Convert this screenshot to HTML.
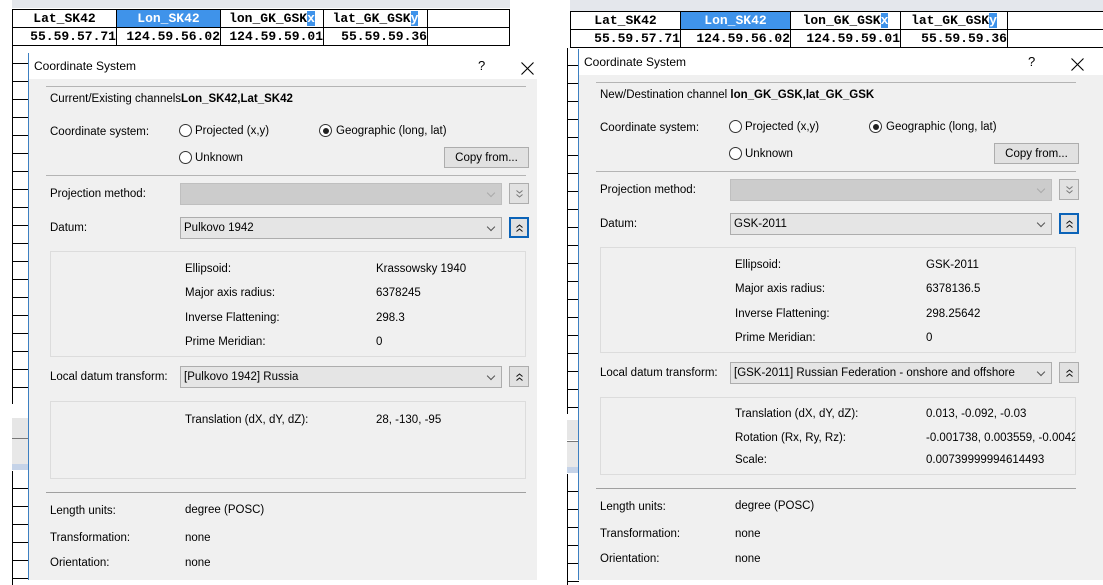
<!DOCTYPE html>
<html><head><meta charset="utf-8">
<style>
*{margin:0;padding:0;box-sizing:border-box}
body{width:1103px;height:585px;background:#fff;position:relative;overflow:hidden;font-family:"Liberation Sans",sans-serif;font-size:11.5px;color:#000}
.a{position:absolute;white-space:nowrap}
.dlg .a{transform:translateY(2px)}
.strip{position:absolute;background:#e4e7ec}
.tbl{position:absolute;border:1.5px solid #000;background:#fff}
.cell{position:absolute;top:0;height:100%;border-right:1.5px solid #000;font-family:"Liberation Mono",monospace;font-weight:bold;font-size:13px;text-align:center;line-height:17px}
.grid{position:absolute;background:repeating-linear-gradient(to bottom,#fff 0,#fff 17px,#000 17px,#000 18px);border-left:1.5px solid #000}
.dlg{position:absolute;background:#f0f0f0;border-left:1px solid #3c7fc1;overflow:hidden}
.title{position:absolute;left:0;top:0;right:0;height:26px;background:#fff}
.sep{position:absolute;height:1px;background:#a0a0a0}
.radio{position:absolute;width:13px;height:13px;border:1px solid #333;border-radius:50%;background:#fff}
.radio.on::after{content:"";position:absolute;left:2.5px;top:2.5px;width:6px;height:6px;border-radius:50%;background:#222}
.btn{position:absolute;background:#e1e1e1;border:1px solid #adadad;text-align:center;line-height:20px}
.combo{position:absolute;background:#e5e5e5;border:1px solid #adadad;padding-left:3px;line-height:21px;height:22px}
.combo.dis{background:#ccc;border-color:#bfbfbf}
.arr{position:absolute;right:7px;top:6px;width:6px;height:6px;border-right:1px solid #555;border-bottom:1px solid #555;transform:rotate(45deg)}
.dis .arr{border-color:#aaa}
.sb{position:absolute;width:20px;height:21px;background:#e1e1e1;border:1px solid #adadad}
.sb svg{position:absolute;left:5px;top:5px}
.sb.foc{border:2px solid #0b63b8}
.sb.foc svg{left:4px;top:4px}
.grp{position:absolute;border:1px solid #dcdcdc}
</style></head><body>

<!-- LEFT PANEL -->
<div class="strip" style="left:12px;top:0;width:498px;height:8px"></div>
<div class="tbl" style="left:12px;top:9px;width:498px;height:19px">
 <div class="cell" style="left:0;width:104px">Lat_SK42</div>
 <div class="cell" style="left:104px;width:104px;background:#3f93ea;color:#fff">Lon_SK42</div>
 <div class="cell" style="left:208px;width:103px">lon_GK_GSK<span style="background:#3f93ea;color:#fff">x</span></div>
 <div class="cell" style="left:311px;width:104px">lat_GK_GSK<span style="background:#3f93ea;color:#fff">y</span></div>
</div>
<div class="tbl" style="left:12px;top:27px;width:498px;height:19px">
 <div class="cell" style="left:0;width:104px;text-align:right">55.59.57.71</div>
 <div class="cell" style="left:104px;width:104px;text-align:right">124.59.56.02</div>
 <div class="cell" style="left:208px;width:103px;text-align:right">124.59.59.01</div>
 <div class="cell" style="left:311px;width:104px;text-align:right">55.59.59.36</div>
</div>
<div class="grid" style="left:12px;top:46px;width:17px;height:358px"></div>
<div class="strip" style="left:12px;top:418px;width:17px;height:20px;background:#e6e6e6"></div>
<div class="strip" style="left:12px;top:438px;width:17px;height:1px;background:#777"></div>
<div class="strip" style="left:12px;top:439px;width:17px;height:25px;background:#e8e8e8"></div>
<div class="strip" style="left:12px;top:464px;width:17px;height:6px;background:#c5d3e8"></div>
<div class="grid" style="left:12px;top:471px;width:17px;height:114px"></div>

<div class="dlg" style="left:28px;top:53px;width:509px;height:527px">
 <div class="title"></div>
 <div class="a" style="left:5px;top:4px;font-size:12px">Coordinate System</div>
 <div class="a" style="left:449px;top:3px;font-size:13px">?</div>
 <svg class="a" style="left:492px;top:7px" width="13" height="13"><path d="M0.5 0.5L12.5 12.5M12.5 0.5L0.5 12.5" stroke="#000" stroke-width="1.1"/></svg>
 <div class="sep" style="left:17px;top:33px;width:480px;background:#b4b4b4"></div>
 <div class="a" style="left:21px;top:38px">Current/Existing channels<b>Lon_SK42,Lat_SK42</b></div>
 <div class="a" style="left:21px;top:71px">Coordinate system:</div>
 <div class="radio" style="left:150px;top:71px"></div><div class="a" style="left:166px;top:70px">Projected (x,y)</div>
 <div class="radio on" style="left:290px;top:71px"></div><div class="a" style="left:307px;top:70px">Geographic (long, lat)</div>
 <div class="radio" style="left:150px;top:98px"></div><div class="a" style="left:166px;top:97px">Unknown</div>
 <div class="btn" style="left:415px;top:94px;width:85px;height:21px">Copy from...</div>
 <div class="sep" style="left:17px;top:122px;width:480px;background:#b4b4b4"></div>
 <div class="a" style="left:21px;top:133px">Projection method:</div>
 <div class="combo dis" style="left:151px;top:130px;width:322px"><div class="arr"></div></div>
 <div class="sb" style="left:480px;top:130px"><svg width="9" height="10"><path d="M1.5 1.5L4.5 4L7.5 1.5M1.5 5.5L4.5 8L7.5 5.5" stroke="#777" fill="none"/></svg></div>
 <div class="a" style="left:21px;top:167px">Datum:</div>
 <div class="combo" style="left:151px;top:164px;width:322px">Pulkovo 1942<div class="arr"></div></div>
 <div class="sb foc" style="left:480px;top:164px"><svg width="9" height="10"><path d="M1.5 4.5L4.5 2L7.5 4.5M1.5 8.5L4.5 6L7.5 8.5" stroke="#111" fill="none"/></svg></div>
 <div class="grp" style="left:21px;top:198px;width:476px;height:106px"></div>
 <div class="a" style="left:156px;top:208px">Ellipsoid:</div><div class="a" style="left:347px;top:208px">Krassowsky 1940</div>
 <div class="a" style="left:156px;top:232px">Major axis radius:</div><div class="a" style="left:347px;top:232px">6378245</div>
 <div class="a" style="left:156px;top:257px">Inverse Flattening:</div><div class="a" style="left:347px;top:257px">298.3</div>
 <div class="a" style="left:156px;top:281px">Prime Meridian:</div><div class="a" style="left:347px;top:281px">0</div>
 <div class="a" style="left:21px;top:316px">Local datum transform:</div>
 <div class="combo" style="left:151px;top:313px;width:322px">[Pulkovo 1942] Russia<div class="arr"></div></div>
 <div class="sb" style="left:480px;top:313px"><svg width="9" height="10"><path d="M1.5 4.5L4.5 2L7.5 4.5M1.5 8.5L4.5 6L7.5 8.5" stroke="#111" fill="none"/></svg></div>
 <div class="grp" style="left:21px;top:348px;width:476px;height:78px"></div>
 <div class="a" style="left:156px;top:359px">Translation (dX, dY, dZ):</div><div class="a" style="left:347px;top:359px">28, -130, -95</div>
 <div class="sep" style="left:17px;top:439px;width:480px"></div>
 <div class="a" style="left:21px;top:450px">Length units:</div><div class="a" style="left:156px;top:449px">degree (POSC)</div>
 <div class="a" style="left:21px;top:477px">Transformation:</div><div class="a" style="left:156px;top:477px">none</div>
 <div class="a" style="left:21px;top:502px">Orientation:</div><div class="a" style="left:156px;top:502px">none</div>
</div>

<!-- RIGHT PANEL -->
<div class="strip" style="left:570px;top:0;width:533px;height:11px"></div>
<div class="tbl" style="left:570px;top:11px;width:540px;height:19px">
 <div class="cell" style="left:0;width:110px">Lat_SK42</div>
 <div class="cell" style="left:110px;width:110px;background:#3f93ea;color:#fff">Lon_SK42</div>
 <div class="cell" style="left:220px;width:110px">lon_GK_GSK<span style="background:#3f93ea;color:#fff">x</span></div>
 <div class="cell" style="left:330px;width:107px">lat_GK_GSK<span style="background:#3f93ea;color:#fff">y</span></div>
</div>
<div class="tbl" style="left:570px;top:29px;width:540px;height:19px">
 <div class="cell" style="left:0;width:110px;text-align:right">55.59.57.71</div>
 <div class="cell" style="left:110px;width:110px;text-align:right">124.59.56.02</div>
 <div class="cell" style="left:220px;width:110px;text-align:right">124.59.59.01</div>
 <div class="cell" style="left:330px;width:107px;text-align:right">55.59.59.36</div>
</div>
<div class="grid" style="left:567px;top:48px;width:12px;height:366px"></div>
<div class="strip" style="left:567px;top:420px;width:12px;height:20px;background:#e6e6e6"></div>
<div class="strip" style="left:567px;top:441px;width:12px;height:1px;background:#777"></div>
<div class="strip" style="left:567px;top:442px;width:12px;height:25px;background:#e8e8e8"></div>
<div class="strip" style="left:567px;top:467px;width:12px;height:6px;background:#c5d3e8"></div>
<div class="grid" style="left:567px;top:474px;width:12px;height:111px"></div>

<div class="dlg" style="left:578px;top:49px;width:530px;height:531px">
 <div class="title"></div>
 <div class="a" style="left:5px;top:4px;font-size:12px">Coordinate System</div>
 <div class="a" style="left:449px;top:3px;font-size:13px">?</div>
 <svg class="a" style="left:492px;top:7px" width="13" height="13"><path d="M0.5 0.5L12.5 12.5M12.5 0.5L0.5 12.5" stroke="#000" stroke-width="1.1"/></svg>
 <div class="sep" style="left:17px;top:33px;width:480px;background:#b4b4b4"></div>
 <div class="a" style="left:21px;top:38px">New/Destination channel <b>lon_GK_GSK,lat_GK_GSK</b></div>
 <div class="a" style="left:21px;top:71px">Coordinate system:</div>
 <div class="radio" style="left:150px;top:71px"></div><div class="a" style="left:166px;top:70px">Projected (x,y)</div>
 <div class="radio on" style="left:290px;top:71px"></div><div class="a" style="left:307px;top:70px">Geographic (long, lat)</div>
 <div class="radio" style="left:150px;top:98px"></div><div class="a" style="left:166px;top:97px">Unknown</div>
 <div class="btn" style="left:415px;top:94px;width:85px;height:21px">Copy from...</div>
 <div class="sep" style="left:17px;top:122px;width:480px;background:#b4b4b4"></div>
 <div class="a" style="left:21px;top:133px">Projection method:</div>
 <div class="combo dis" style="left:151px;top:130px;width:322px"><div class="arr"></div></div>
 <div class="sb" style="left:480px;top:130px"><svg width="9" height="10"><path d="M1.5 1.5L4.5 4L7.5 1.5M1.5 5.5L4.5 8L7.5 5.5" stroke="#777" fill="none"/></svg></div>
 <div class="a" style="left:21px;top:167px">Datum:</div>
 <div class="combo" style="left:151px;top:164px;width:322px">GSK-2011<div class="arr"></div></div>
 <div class="sb foc" style="left:480px;top:164px"><svg width="9" height="10"><path d="M1.5 4.5L4.5 2L7.5 4.5M1.5 8.5L4.5 6L7.5 8.5" stroke="#111" fill="none"/></svg></div>
 <div class="grp" style="left:21px;top:198px;width:476px;height:106px"></div>
 <div class="a" style="left:156px;top:208px">Ellipsoid:</div><div class="a" style="left:347px;top:208px">GSK-2011</div>
 <div class="a" style="left:156px;top:232px">Major axis radius:</div><div class="a" style="left:347px;top:232px">6378136.5</div>
 <div class="a" style="left:156px;top:257px">Inverse Flattening:</div><div class="a" style="left:347px;top:257px">298.25642</div>
 <div class="a" style="left:156px;top:281px">Prime Meridian:</div><div class="a" style="left:347px;top:281px">0</div>
 <div class="a" style="left:21px;top:316px">Local datum transform:</div>
 <div class="combo" style="left:151px;top:313px;width:322px">[GSK-2011] Russian Federation - onshore and offshore<div class="arr"></div></div>
 <div class="sb" style="left:480px;top:313px"><svg width="9" height="10"><path d="M1.5 4.5L4.5 2L7.5 4.5M1.5 8.5L4.5 6L7.5 8.5" stroke="#111" fill="none"/></svg></div>
 <div class="grp" style="left:21px;top:348px;width:476px;height:78px"></div>
 <div style="position:absolute;left:347px;top:381px;width:149px;height:18px;overflow:hidden"><div class="a" style="left:0;top:0">-0.001738, 0.003559, -0.004263</div></div>
 <div class="a" style="left:156px;top:357px">Translation (dX, dY, dZ):</div><div class="a" style="left:347px;top:357px">0.013, -0.092, -0.03</div>
 <div class="a" style="left:156px;top:381px">Rotation (Rx, Ry, Rz):</div>
 <div class="a" style="left:156px;top:403px">Scale:</div><div class="a" style="left:347px;top:403px">0.00739999994614493</div>
 <div class="sep" style="left:17px;top:439px;width:480px"></div>
 <div class="a" style="left:21px;top:450px">Length units:</div><div class="a" style="left:156px;top:449px">degree (POSC)</div>
 <div class="a" style="left:21px;top:477px">Transformation:</div><div class="a" style="left:156px;top:477px">none</div>
 <div class="a" style="left:21px;top:502px">Orientation:</div><div class="a" style="left:156px;top:502px">none</div>
</div>
</body></html>
